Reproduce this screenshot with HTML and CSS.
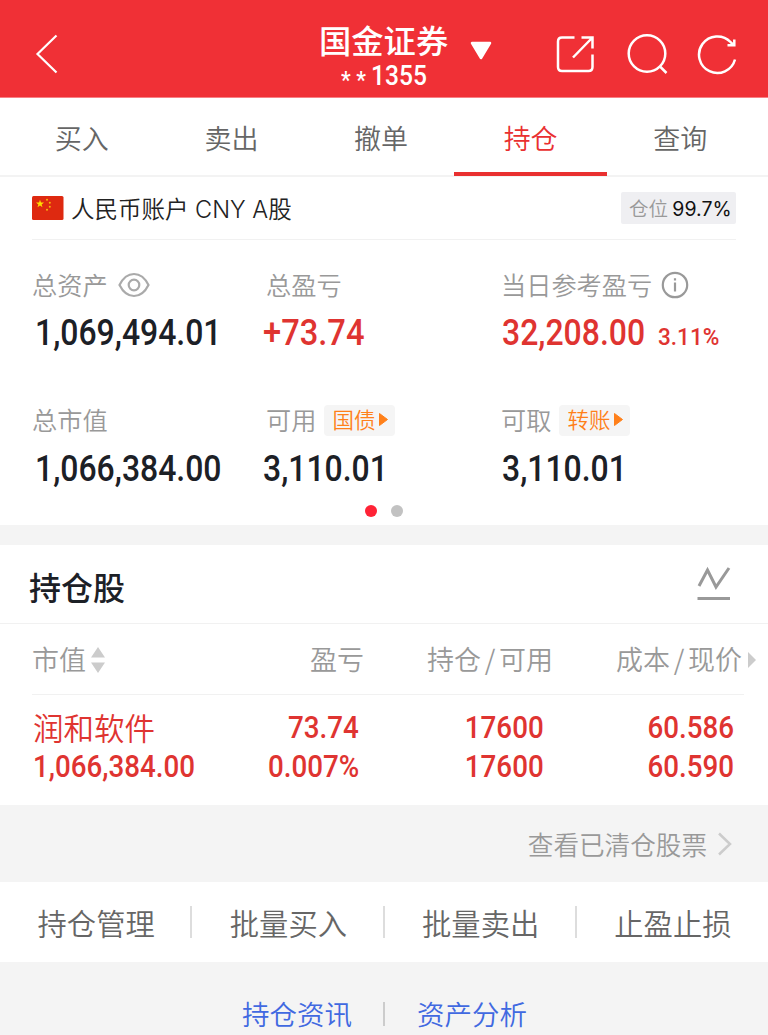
FILE: index.html
```html
<!DOCTYPE html>
<html lang="zh-CN">
<head>
<meta charset="utf-8">
<title>持仓</title>
<link rel="stylesheet" href="styles.css">
</head>
<body>
<header class="header">
  <svg class="back" width="24" height="42" viewBox="0 0 24 42"><path d="M21.500 2.500 2.500 21 21.500 39.500"/></svg>
  <div class="broker">
    <div class="broker-name">国金证券</div>
    <div class="broker-id"><span class="num"><span class="stars">**</span>1355</span></div>
  </div>
  <svg class="caret" width="24" height="20" viewBox="0 0 24 20"><path d="M3 3H21L12 18Z"/></svg>
  <div class="tools">
    <svg width="40" height="40" viewBox="0 0 40 40"><path d="M19.500 4.500H7Q3 4.500 3 8.500V34Q3 38 7 38H33.500Q37.500 38 37.500 34V21.500M26.500 4.500H37.500V15.500M37 5 18 24.500"/></svg>
    <svg width="42" height="42" viewBox="0 0 42 42"><circle cx="21" cy="20.500" r="18.300"/><path d="M34 33.500 40.500 40"/></svg>
    <svg width="42" height="42" viewBox="0 0 42 42"><path d="M39 26.500A18.300 18.300 0 1 1 34.500 9L37 11.500"/><path d="M38.300 6.500V12.300H31.500"/></svg>
  </div>
</header>
<nav class="tabs">
  <div class="tab">买入</div><div class="tab">卖出</div><div class="tab">撤单</div><div class="tab active">持仓</div><div class="tab">查询</div>
</nav>
<section class="summary">
  <div class="account">
    <svg class="flag" width="32" height="24" viewBox="0 0 32 24"><rect width="31.500" height="24" rx="1.500" fill="#de2910"/><path fill="#ffde00" d="M8 3.800 9 6.600H12L9.600 8.400 10.500 11.200 8 9.500 5.500 11.200 6.400 8.400 4 6.600H7Z"/><g fill="#f9b60c"><circle cx="15" cy="3.800" r="1"/><circle cx="17.800" cy="6.800" r="1"/><circle cx="17.800" cy="10.800" r="1"/><circle cx="15" cy="13.800" r="1"/></g></svg>
    <span class="account-name">人民币账户<span class="latin"> CNY A</span>股</span>
    <span class="position">仓位 <b>99.7%</b></span>
  </div>
  <div class="metrics">
    <div class="metric">
      <div class="label"><span>总资产</span><svg class="eye" width="32" height="26" viewBox="0 0 32 26"><path d="M1.500 13Q7 2 16 2T30.500 13Q25 24 16 24T1.500 13Z"/><circle cx="16" cy="13" r="5.300"/></svg></div>
      <div class="value inset"><span class="num">1,069,494.01</span></div>
    </div>
    <div class="metric">
      <div class="label shift"><span>总盈亏</span></div>
      <div class="value red"><span class="num signed">+73.74</span></div>
    </div>
    <div class="metric">
      <div class="label"><span>当日参考盈亏</span><svg class="info" width="28" height="28" viewBox="0 0 28 28"><circle cx="14" cy="14" r="12.200"/><path d="M14 11.500V20.500M14 7.200V9.400"/></svg></div>
      <div class="value red daily"><span class="num">32,208.00</span><span class="num percent">3.11%</span></div>
    </div>
    <div class="metric">
      <div class="label"><span>总市值</span></div>
      <div class="value inset"><span class="num">1,066,384.00</span></div>
    </div>
    <div class="metric">
      <div class="label shift"><span>可用</span><div class="tag"><span>国债</span><svg width="9" height="13" viewBox="0 0 9 13"><path d="M.5.5 8.500 6.500.5 12.500Z"/></svg></div></div>
      <div class="value"><span class="num">3,110.01</span></div>
    </div>
    <div class="metric">
      <div class="label"><span>可取</span><div class="tag"><span>转账</span><svg width="9" height="13" viewBox="0 0 9 13"><path d="M.5.5 8.500 6.500.5 12.500Z"/></svg></div></div>
      <div class="value daily"><span class="num">3,110.01</span></div>
    </div>
  </div>
  <div class="dots"><i class="dot on"></i><i class="dot"></i></div>
</section>
<section class="holdings">
  <div class="holdings-head">
    <h2>持仓股</h2>
    <svg width="34" height="36" viewBox="0 0 34 36"><path d="M2 21 10.500 5 19 22 32 3M.5 33.500H33"/></svg>
  </div>
  <div class="row columns">
    <div class="sortable">市值<svg class="sort" width="14" height="26" viewBox="0 0 14 26"><path d="M0 10.500 7 0 14 10.500ZM0 15.500H14L7 26Z"/></svg></div>
    <div>盈亏</div>
    <div>持仓<span class="slash">/</span>可用</div>
    <div class="price">成本<span class="slash">/</span>现价<svg class="more" width="8" height="16" viewBox="0 0 8 16"><path d="M0 0 8 8 0 16Z"/></svg></div>
  </div>
  <div class="row stock">
    <div><span class="stock-name">润和软件</span><span class="num">1,066,384.00</span></div>
    <div><span class="num">73.74</span><span class="num">0.007%</span></div>
    <div><span class="num">17600</span><span class="num">17600</span></div>
    <div><span class="num">60.586</span><span class="num">60.590</span></div>
  </div>
</section>
<div class="cleared">查看已清仓股票<svg width="15" height="24" viewBox="0 0 15 24"><path d="M2 1.500 13 12 2 22.500"/></svg></div>
<div class="actions"><span>持仓管理</span><span>批量买入</span><span>批量卖出</span><span>止盈止损</span></div>
<footer class="footer"><span>持仓资讯</span><i></i><span>资产分析</span></footer>
</body>
</html>
```
FILE: styles.css
```css
* { box-sizing: border-box; }
body {
  margin: 0;
  width: 768px;
  height: 1035px;
  overflow: hidden;
  background: #f4f4f4;
  font-family: "Noto Sans CJK SC", sans-serif;
  font-weight: 350;
  color: #1c2026;
}
svg { flex: none; fill: none; }
.num {
  display: inline-block;
  font-family: Roboto, sans-serif;
  font-weight: 500;
  transform: scaleX(.91);
  transform-origin: left center;
  white-space: nowrap;
}

.header {
  display: flex;
  height: 98px;
  padding-left: 35px;
  background: #f03036;
  color: #fff;
  border-bottom: 1px solid #f88085;
}
.header svg { stroke: #fff; stroke-width: 2.500; }
.header .back { margin-top: 33px; stroke-width: 2.200; }
.broker { width: 130px; margin-left: 260px; padding-top: 23px; }
.broker-name { font-size: 32.300px; font-weight: 500; line-height: 33px; white-space: nowrap; }
.broker-id { padding-left: 22px; font-size: 27px; line-height: 35px; }
.stars { display: inline-block; position: relative; top: 3px; width: 33px; letter-spacing: 6px; font-size: 24px; line-height: 20px; }
.header .caret { margin: 40px 0 0 20px; fill: #fff; stroke-linejoin: round; }
.tools { display: flex; align-items: flex-start; margin-left: 62px; padding-top: 33px; gap: 31px; }
.tools svg + svg + svg { margin-left: -3px; }

.tabs {
  display: flex;
  height: 79px;
  padding: 0 13px 0 7px;
  background: #fff;
  border-bottom: 2px solid #f3f3f3;
}
.tab { flex: 1; text-align: center; font-size: 27px; line-height: 79px; color: #666; }
.active {
  margin: 0 -2px -1px;
  flex: 0 0 153.600px;
  color: #e93030;
  border-bottom: 4px solid #e93030;
}

.summary { height: 348px; background: #fff; }
.account {
  display: flex;
  align-items: center;
  height: 63px;
  margin: 0 32px;
  border-bottom: 1px solid #f1f1f1;
}
.account-name { margin: -1px 0 0 7px; font-size: 23.500px; color: #222; white-space: pre; }
.latin { font-family: Inter, sans-serif; font-size: 23.500px; font-weight: 300; }
.position {
  width: 115px;
  height: 32px;
  margin-left: auto;
  padding-left: 8px;
  background: #efeff2;
  border-radius: 2px;
  font-size: 19.500px;
  line-height: 31px;
  color: #999;
  white-space: nowrap;
}
.position b { font: 400 19.500px/31px Inter, sans-serif; color: #111; }
.metrics {
  display: grid;
  grid-template-columns: 231px 238px 1fr;
  grid-template-rows: 135px 122px;
  padding: 27px 0 0 32px;
  height: 257px;
}
.label { display: flex; align-items: center; height: 36px; font-size: 25.200px; line-height: 35px; color: #999; white-space: nowrap; }
.label > span { height: 36px; }
.shift { padding-left: 3px; }
.label svg { stroke: #999; stroke-width: 2.200; }
.label .eye { margin-left: 10px; stroke: #aaa; }
.info { margin-left: 9px; }
.value { font-size: 36.500px; line-height: 53px; white-space: nowrap; }
.value .num { transform: scaleX(.875); }
.value .signed { transform: scaleX(.895); }
.metric:nth-child(n+4) .value { line-height: 56px; }
.inset { padding-left: 3px; }
.daily { padding-left: 1px; }
.red { color: #df3431; }
.value .percent { margin-left: -8px; font-size: 23.500px; transform: scaleX(.96); }
.tag {
  display: flex;
  align-items: center;
  width: 71px;
  height: 31px;
  margin-left: 8px;
  padding-left: 8px;
  background: #f5f5f5;
  border-radius: 4px;
  font-size: 21.500px;
  line-height: 28px;
  color: #ff801a;
}
.tag > span { height: 31px; }
.label .tag svg { margin: -2px 0 0 4px; fill: #ff801a; stroke: #ff801a; stroke-width: 1; }
.dots { display: flex; justify-content: center; gap: 14px; padding-top: 8px; }
.dot { width: 12px; height: 12px; border-radius: 50%; background: #c2c2c2; }
.on { background: #ff2336; }

.holdings { height: 260px; margin-top: 20px; background: #fff; }
.holdings-head {
  display: flex;
  justify-content: space-between;
  height: 79px;
  padding: 20px 37px 0 29px;
  border-bottom: 1px solid #f1f1f1;
}
.holdings-head h2 { margin: 0; font-size: 32px; font-weight: 500; line-height: 42px; }
.holdings-head svg { stroke: #999; stroke-width: 3; }
.row { display: grid; grid-template-columns: 140px 187px 185px 1fr; margin-left: 32px; text-align: right; white-space: nowrap; }
.columns {
  grid-template-columns: 140px 192px 189px 1fr;
  width: 712px;
  height: 71px;
  border-bottom: 1px solid #f1f1f1;
  font-size: 27px;
  line-height: 70px;
  color: #999;
}
.sortable { text-align: left; }
.price { margin-right: -12px; }
.slash { display: inline-block; width: 18px; text-align: center; }
.sort { margin-left: 5px; fill: #ccc; vertical-align: -3px; }
.more { margin-left: 6px; fill: #ccc; vertical-align: 2px; }
.stock { height: 110px; padding: 13px 34px 0 0; font-size: 30.500px; line-height: 39px; color: #df3431; }
.stock > div { display: flex; flex-direction: column; align-items: flex-end; }
.stock > div:first-child { align-items: flex-start; padding-left: 1px; }
.stock .num { transform-origin: right center; }
.stock > div:first-child .num { transform-origin: left center; }

.cleared {
  display: flex;
  align-items: center;
  justify-content: flex-end;
  gap: 10px;
  height: 77px;
  padding-right: 36px;
  font-size: 25.600px;
  color: #999;
}
.cleared svg { stroke: #ccc; stroke-width: 2.500; }
.actions { display: flex; align-items: center; height: 80px; background: #fff; font-size: 29.300px; color: #666; }
.actions span { flex: 1; height: 32px; line-height: 33px; text-align: center; padding-left: 2px; border-right: 2px solid #ddd; }
.actions span:last-child { border: 0; padding-right: 1px; }
.footer { display: flex; align-items: center; height: 73px; padding: 30px 0 0 242px; font-size: 27.500px; line-height: 38px; color: #4169e1; }
.footer i { width: 2px; height: 24px; margin: 0 32px 0 31px; background: #ccc; }
.footer span { height: 40px; }
```
